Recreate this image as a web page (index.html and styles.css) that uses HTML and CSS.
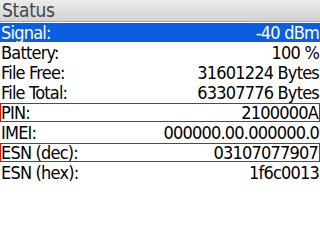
FILE: index.html
```html
<!DOCTYPE html>
<html lang="en">
<head>
  <meta charset="UTF-8">
  <meta name="viewport" content="width=device-width, initial-scale=1.0">
  <title>Status</title>
  <link rel="stylesheet" href="styles.css">
</head>
<body>
  <div class="title-bar">Status</div>

  <div class="status-list">
    <div class="row selected"><span>Signal:</span><span>-40 dBm</span></div>
    <div class="row"><span>Battery:</span><span>100 %</span></div>
    <div class="row"><span>File Free:</span><span>31601224 Bytes</span></div>
    <div class="row"><span>File Total:</span><span>63307776 Bytes</span></div>
    <div class="row boxed"><span>PIN:</span><span>2100000A</span></div>
    <div class="row"><span>IMEI:</span><span>000000.00.000000.0</span></div>
    <div class="row boxed"><span>ESN (dec):</span><span>03107077907</span></div>
    <div class="row"><span>ESN (hex):</span><span>1f6c0013</span></div>
  </div>
</body>
</html>
```

FILE: styles.css
```css
body {
  margin: 0;
  width: 320px;
  height: 240px;
  overflow: hidden;
  background-color: #fff;
  font-family: "DejaVu Sans", sans-serif;
  font-stretch: condensed;
  letter-spacing: -0.8px;
}

.title-bar {
  height: 21px;
  padding-left: 2px;
  font-size: 19px;
  line-height: 21px;
  letter-spacing: -0.3px;
  color: #454545;
  background: linear-gradient(#ececec, #d2d2d2);
  border-bottom: 1px solid #a8a8a8;
}

.status-list {
  display: flex;
  flex-direction: column;
  padding-top: 1px;
}

.row {
  display: flex;
  justify-content: space-between;
  align-items: center;
  box-sizing: border-box;
  height: 20px;
  padding: 0 1px;
  font-size: 18px;
  line-height: 18px;
  color: #000;
  white-space: nowrap;
}

.row.selected {
  height: 19px;
  margin-bottom: 1px;
  background-color: #0a5ee2;
  color: #fff;
}

.row.boxed {
  height: 19px;
  margin-bottom: 1px;
  line-height: 17px;
  border: 1px solid #f00;
  padding: 0 1px 0 0;
}
```
